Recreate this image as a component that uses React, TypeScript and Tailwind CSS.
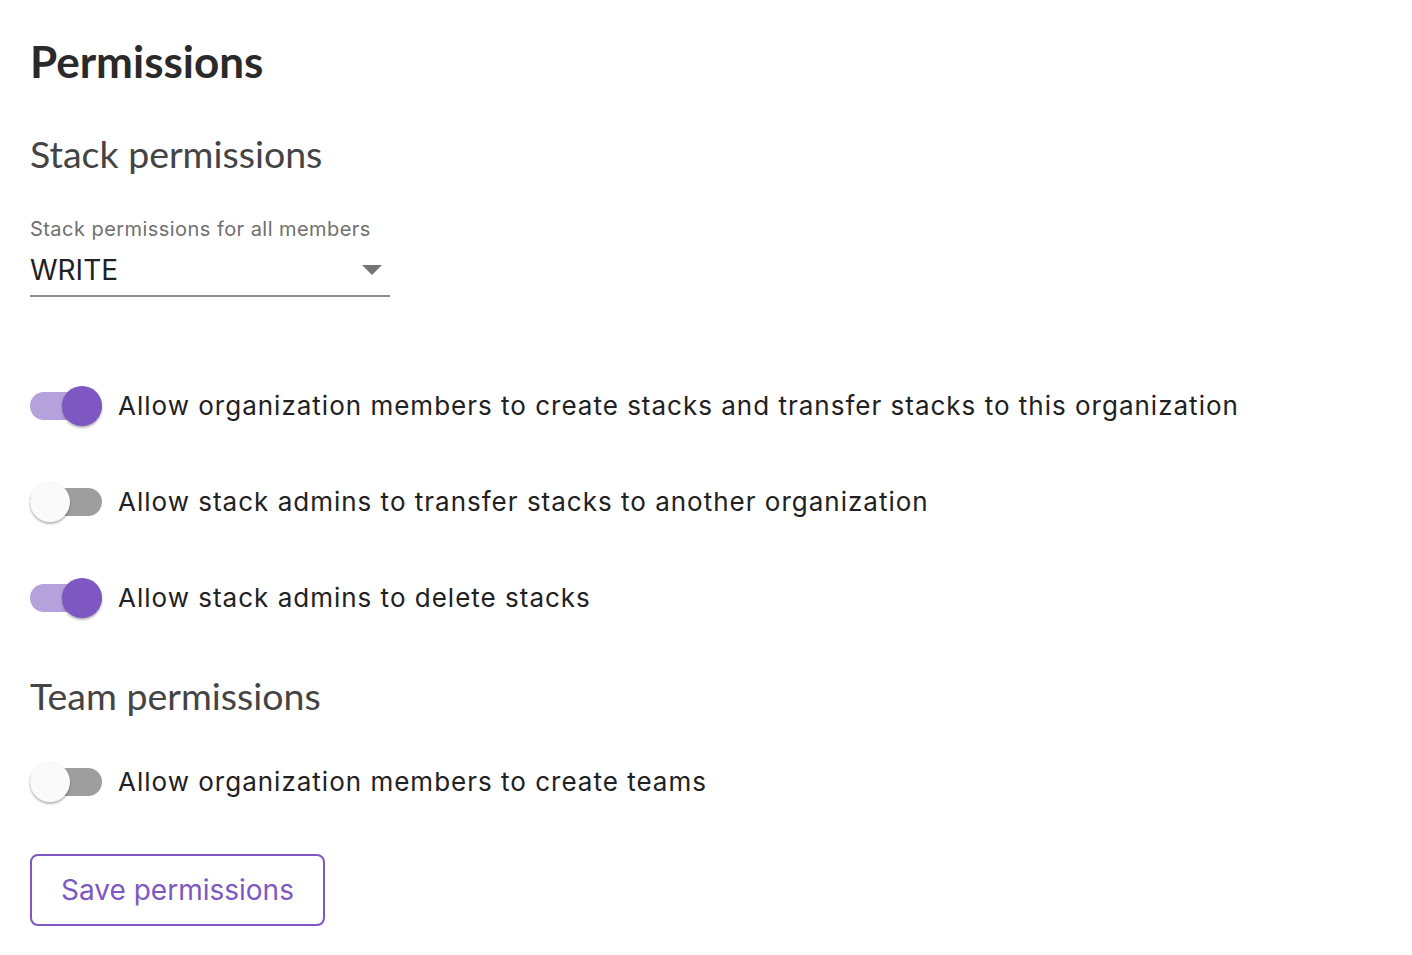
import React, { useState } from "react";

function Toggle({ on, onClick }: { on: boolean; onClick: () => void }) {
  return (
    <button
      type="button"
      onClick={onClick}
      className="relative w-[72px] h-[40px] shrink-0 flex items-center"
    >
      <span
        className={`absolute left-0 top-[6px] w-[72px] h-[28px] rounded-full ${
          on ? "bg-[#b5a1dc]" : "bg-[#9e9e9e]"
        }`}
      />
      <span
        className={`absolute top-0 w-[40px] h-[40px] rounded-full shadow-[0_2px_2px_rgba(0,0,0,0.2),0_1px_3px_rgba(0,0,0,0.14)] ${
          on ? "left-[32px] bg-[#7e57c2]" : "left-0 bg-[#fafafa]"
        }`}
      />
    </button>
  );
}

function Row({ label, on, onClick }: { label: string; on: boolean; onClick: () => void }) {
  return (
    <div className="flex items-center h-[40px] gap-[16px]">
      <Toggle on={on} onClick={onClick} />
      <span className="text-[26px] tracking-[1px] text-[#212121] leading-none">{label}</span>
    </div>
  );
}

export default function App() {
  const [t, setT] = useState([true, false, true, false]);
  const flip = (i: number) => setT((p) => p.map((v, j) => (j === i ? !v : v)));
  return (
    <div
      className="bg-white min-h-[955px] w-[1412px] pl-[30px] pt-[37px]"
      style={{ fontFamily: "Inter, 'Noto Sans', sans-serif" }}
    >
      <h1
        className="text-[44px] font-bold text-[#2a2a2a] leading-[48px] h-[48px]"
        style={{ fontFamily: "Lato, sans-serif" }}
      >
        Permissions
      </h1>
      <h2
        className="mt-[47px] text-[37.5px] text-[#444444] leading-[44px] h-[44px]"
        style={{ fontFamily: "Lato, sans-serif" }}
      >
        Stack permissions
      </h2>
      <div className="mt-[41px] w-[360px]">
        <div className="text-[20px] tracking-[0.45px] text-[#707070] leading-[24px]">
          Stack permissions for all members
        </div>
        <div className="flex items-center justify-between h-[56px] pt-[4px] border-b-2 border-[#8f8f8f]">
          <span className="text-[28px] text-[#212121] leading-none">WRITE</span>
          <svg width="20" height="10" viewBox="0 0 20 10" className="mr-[8px]">
            <path d="M0 0 L20 0 L10 10 Z" fill="#757575" />
          </svg>
        </div>
      </div>
      <div className="mt-[89px] flex flex-col gap-[56px]">
        <Row
          label="Allow organization members to create stacks and transfer stacks to this organization"
          on={t[0]}
          onClick={() => flip(0)}
        />
        <Row label="Allow stack admins to transfer stacks to another organization" on={t[1]} onClick={() => flip(1)} />
        <Row label="Allow stack admins to delete stacks" on={t[2]} onClick={() => flip(2)} />
      </div>
      <h2
        className="mt-[56px] text-[37.5px] text-[#444444] leading-[44px] h-[44px]"
        style={{ fontFamily: "Lato, sans-serif" }}
      >
        Team permissions
      </h2>
      <div className="mt-[44px]">
        <Row label="Allow organization members to create teams" on={t[3]} onClick={() => flip(3)} />
      </div>
      <button
        type="button"
        className="mt-[52px] w-[295px] h-[72px] rounded-[8px] border-2 border-[#7e57c2] text-[#7e57c2] text-[28px] flex items-center justify-center"
      >
        Save permissions
      </button>
    </div>
  );
}
